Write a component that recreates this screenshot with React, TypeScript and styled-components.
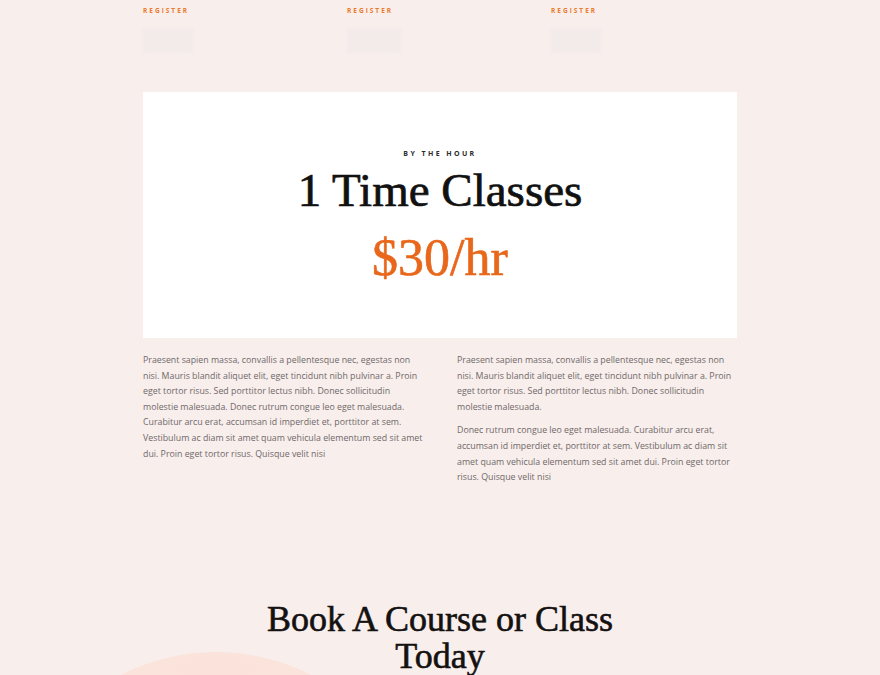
import React from "react";
import styled, { createGlobalStyle } from "styled-components";

const GlobalStyle = createGlobalStyle`
  html, body {
    margin: 0;
    padding: 0;
    background: #f8eeec;
  }
  body {
    font-family: "Open Sans", "Liberation Sans", sans-serif;
    overflow: hidden;
  }
`;

const Page = styled.div`
  position: relative;
  width: 880px;
  height: 675px;
  overflow: hidden;
  background: #f8eeec;
`;

const Container = styled.div`
  position: relative;
  z-index: 1;
  width: 594px;
  margin: 0 auto;
`;

const TopRow = styled.div`
  display: grid;
  grid-template-columns: repeat(3, 1fr);
  column-gap: 18px;
  padding-top: 7px;
`;

const TopItem = styled.div`
  display: flex;
  flex-direction: column;
  align-items: flex-start;
`;

const RegisterLabel = styled.div`
  font-family: "Open Sans", sans-serif;
  font-size: 6.5px;
  line-height: 8px;
  font-weight: 700;
  letter-spacing: 2px;
  color: #ec7a2c;
  text-transform: uppercase;
`;

const Ghost = styled.div<{ $w: number }>`
  margin-top: 14px;
  width: ${(p) => p.$w}px;
  height: 24px;
  background: #f3ebea;
  filter: blur(1px);
`;

const Card = styled.div`
  margin-top: 39px;
  height: 246px;
  background: #ffffff;
  display: flex;
  flex-direction: column;
  align-items: center;
  box-sizing: border-box;
  padding-top: 57px;
`;

const Eyebrow = styled.div`
  font-family: "Open Sans", sans-serif;
  font-size: 7px;
  line-height: 9px;
  font-weight: 700;
  letter-spacing: 2.4px;
  color: #2b2b2b;
  text-transform: uppercase;
`;

const CardTitle = styled.h2`
  margin: 7px 0 0;
  font-family: "Liberation Serif", "Times New Roman", serif;
  font-weight: 400;
  font-size: 47px;
  line-height: 50px;
  color: #111111;
  -webkit-text-stroke: 0.7px #111111;
`;

const Price = styled.div`
  margin-top: 15px;
  font-family: "Liberation Serif", "Times New Roman", serif;
  font-size: 52px;
  line-height: 56px;
  color: #e8671a;
  -webkit-text-stroke: 0.6px #e8671a;
`;

const Columns = styled.div`
  display: grid;
  grid-template-columns: 280px 280px;
  column-gap: 34px;
  margin-top: 15px;
`;

const Column = styled.div`
  display: flex;
  flex-direction: column;
  gap: 8px;
`;

const Para = styled.p`
  margin: 0;
  font-family: "Open Sans", sans-serif;
  font-size: 8.8px;
  line-height: 15.6px;
  color: #6f6969;
`;

const BookTitle = styled.h2`
  margin: 115px auto 0;
  max-width: 400px;
  text-align: center;
  font-family: "Liberation Serif", "Times New Roman", serif;
  font-weight: 400;
  font-size: 36px;
  line-height: 37px;
  color: #141111;
  -webkit-text-stroke: 0.6px #141111;
`;

const Blob = styled.div`
  position: absolute;
  left: 8px;
  top: 652px;
  width: 416px;
  height: 416px;
  border-radius: 50%;
  background: radial-gradient(circle at 50% 20%, #fbe2d9 0%, #fae6df 60%, #f9e9e5 100%);
  z-index: 0;
`;

const p1 =
  "Praesent sapien massa, convallis a pellentesque nec, egestas non nisi. Mauris blandit aliquet elit, eget tincidunt nibh pulvinar a. Proin eget tortor risus. Sed porttitor lectus nibh. Donec sollicitudin molestie malesuada. Donec rutrum congue leo eget malesuada. Curabitur arcu erat, accumsan id imperdiet et, porttitor at sem. Vestibulum ac diam sit amet quam vehicula elementum sed sit amet dui. Proin eget tortor risus. Quisque velit nisi";
const p2 =
  "Praesent sapien massa, convallis a pellentesque nec, egestas non nisi. Mauris blandit aliquet elit, eget tincidunt nibh pulvinar a. Proin eget tortor risus. Sed porttitor lectus nibh. Donec sollicitudin molestie malesuada.";
const p3 =
  "Donec rutrum congue leo eget malesuada. Curabitur arcu erat, accumsan id imperdiet et, porttitor at sem. Vestibulum ac diam sit amet quam vehicula elementum sed sit amet dui. Proin eget tortor risus. Quisque velit nisi";

export default function App() {
  return (
    <Page>
      <GlobalStyle />
      <Blob />
      <Container>
        <TopRow>
          {[50, 54, 50].map((w, i) => (
            <TopItem key={i}>
              <RegisterLabel>Register</RegisterLabel>
              <Ghost $w={w} />
            </TopItem>
          ))}
        </TopRow>
        <Card>
          <Eyebrow>By the hour</Eyebrow>
          <CardTitle>1 Time Classes</CardTitle>
          <Price>$30/hr</Price>
        </Card>
        <Columns>
          <Column>
            <Para>{p1}</Para>
          </Column>
          <Column>
            <Para>{p2}</Para>
            <Para>{p3}</Para>
          </Column>
        </Columns>
        <BookTitle>Book A Course or Class Today</BookTitle>
      </Container>
    </Page>
  );
}
